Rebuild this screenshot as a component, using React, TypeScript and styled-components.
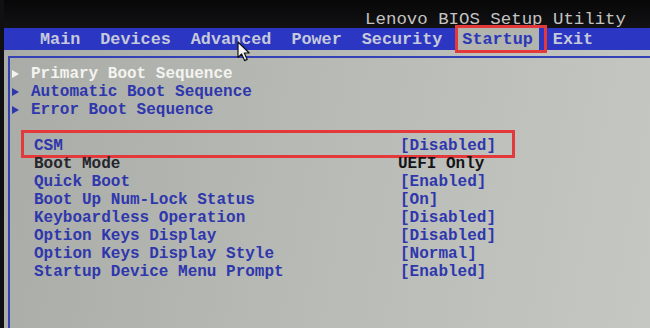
import React from "react";
import styled, { createGlobalStyle } from "styled-components";

const Global = createGlobalStyle`
  html, body { margin: 0; padding: 0; background: #0b0b0c; }
  body { font-family: "Liberation Mono", "DejaVu Sans Mono", monospace; }
`;

const MONO = `"Liberation Mono", "DejaVu Sans Mono", monospace`;
const RED = "#e4393b";
const BLUE_TEXT = "#2f37ad";

const Screen = styled.div`
  position: relative;
  width: 650px;
  height: 328px;
  overflow: hidden;
  display: flex;
  flex-direction: column;
  box-sizing: border-box;
  border-left: 4px solid #101012;
  background: linear-gradient(100deg, #a9aba6 0%, #b7b9b4 45%, #c5c7c3 100%);
  font-family: ${MONO};
`;

const TopBar = styled.div`
  height: 28px;
  flex: none;
  background: linear-gradient(180deg, #070708 0%, #121214 100%);
  display: flex;
  justify-content: flex-end;
  align-items: flex-start;
  box-sizing: border-box;
  padding: 12px 24px 0 0;
  overflow: hidden;
`;

const Title = styled.span`
  font-size: 17.4px;
  line-height: 16px;
  color: #c4c4c2;
  white-space: pre;
`;

const MenuBar = styled.nav`
  height: 22px;
  flex: none;
  background: #2b37c2;
  display: flex;
  align-items: stretch;
  gap: 8px;
  padding-left: 30px;
`;

const MenuItem = styled.span<{ $active?: boolean }>`
  position: relative;
  display: flex;
  align-items: center;
  padding: 0 6px;
  font-size: 16.8px;
  font-weight: 700;
  white-space: pre;
  color: ${(p) => (p.$active ? "#2c38b8" : "#c6c9da")};
  background: ${(p) => (p.$active ? "#b2b4ae" : "transparent")};
  &::after {
    content: "";
    display: ${(p) => (p.$active ? "block" : "none")};
    position: absolute;
    top: -3px;
    bottom: -3px;
    left: -1px;
    right: -8px;
    border: 3px solid ${RED};
  }
`;

const Panel = styled.section`
  flex: 1;
  margin: 6px 0 0 4px;
  border-top: 2px solid #3442b6;
  border-left: 2px solid #3442b6;
  padding-top: 7px;
  display: flex;
  flex-direction: column;
`;

const SubRow = styled.div<{ $hl?: boolean }>`
  height: 18px;
  display: flex;
  align-items: center;
  padding-left: 2px;
  font-size: 16px;
  font-weight: 700;
  line-height: 18px;
  white-space: pre;
  color: ${(p) => (p.$hl ? "#f3f3ef" : BLUE_TEXT)};
`;

const Arrow = styled.span<{ $hl?: boolean }>`
  width: 19px;
  flex: none;
  display: flex;
  align-items: center;
  &::before {
    content: "";
    width: 0;
    height: 0;
    border-left: 7px solid ${(p) => (p.$hl ? "#f3f3ef" : BLUE_TEXT)};
    border-top: 4.5px solid transparent;
    border-bottom: 4.5px solid transparent;
  }
`;

const Spacer = styled.div`
  height: 18px;
`;

const SettingRow = styled.div<{ $boxed?: boolean; $dark?: boolean }>`
  position: relative;
  height: 18px;
  width: 488px;
  margin-left: 14px;
  padding-left: 10px;
  box-sizing: border-box;
  display: grid;
  grid-template-columns: 366px 1fr;
  align-items: center;
  font-size: 16px;
  font-weight: 700;
  line-height: 18px;
  white-space: pre;
  color: ${(p) => (p.$dark ? "#26262c" : BLUE_TEXT)};
  &::after {
    content: "";
    display: ${(p) => (p.$boxed ? "block" : "none")};
    position: absolute;
    top: -7px;
    bottom: -3px;
    left: -3px;
    right: -3px;
    border: 3px solid ${RED};
  }
`;

const Value = styled.span<{ $dark?: boolean }>`
  margin-left: ${(p) => (p.$dark ? "-2px" : "0")};
  color: ${(p) => (p.$dark ? "#141418" : BLUE_TEXT)};
`;

const Cursor = styled.svg`
  position: absolute;
  left: 233px;
  top: 41px;
  width: 15px;
  height: 21px;
`;

const menu = ["Main", "Devices", "Advanced", "Power", "Security", "Startup", "Exit"];

const subs = [
  { label: "Primary Boot Sequence", hl: true },
  { label: "Automatic Boot Sequence" },
  { label: "Error Boot Sequence" },
];

const settings: { label: string; value: string; boxed?: boolean; dark?: boolean }[] = [
  { label: "CSM", value: "[Disabled]", boxed: true },
  { label: "Boot Mode", value: "UEFI Only", dark: true },
  { label: "Quick Boot", value: "[Enabled]" },
  { label: "Boot Up Num-Lock Status", value: "[On]" },
  { label: "Keyboardless Operation", value: "[Disabled]" },
  { label: "Option Keys Display", value: "[Disabled]" },
  { label: "Option Keys Display Style", value: "[Normal]" },
  { label: "Startup Device Menu Prompt", value: "[Enabled]" },
];

export default function App() {
  return (
    <>
      <Global />
      <Screen>
        <TopBar>
          <Title>Lenovo BIOS Setup Utility</Title>
        </TopBar>
        <MenuBar>
          {menu.map((m) => (
            <MenuItem key={m} $active={m === "Startup"}>
              {m}
            </MenuItem>
          ))}
        </MenuBar>
        <Panel>
          {subs.map((s) => (
            <SubRow key={s.label} $hl={s.hl}>
              <Arrow $hl={s.hl} />
              {s.label}
            </SubRow>
          ))}
          <Spacer />
          {settings.map((s) => (
            <SettingRow key={s.label} $boxed={s.boxed} $dark={s.dark}>
              <span>{s.label}</span>
              <Value $dark={s.dark}>{s.value}</Value>
            </SettingRow>
          ))}
        </Panel>
        <Cursor viewBox="0 0 15 21">
          <path
            d="M1 1 L1 16.5 L4.6 13 L7.6 19.6 L10.2 18.4 L7.3 12 L12.2 12 Z"
            fill="#f4f4f4"
            stroke="#111"
            strokeWidth="1.2"
            strokeLinejoin="round"
          />
        </Cursor>
      </Screen>
    </>
  );
}
